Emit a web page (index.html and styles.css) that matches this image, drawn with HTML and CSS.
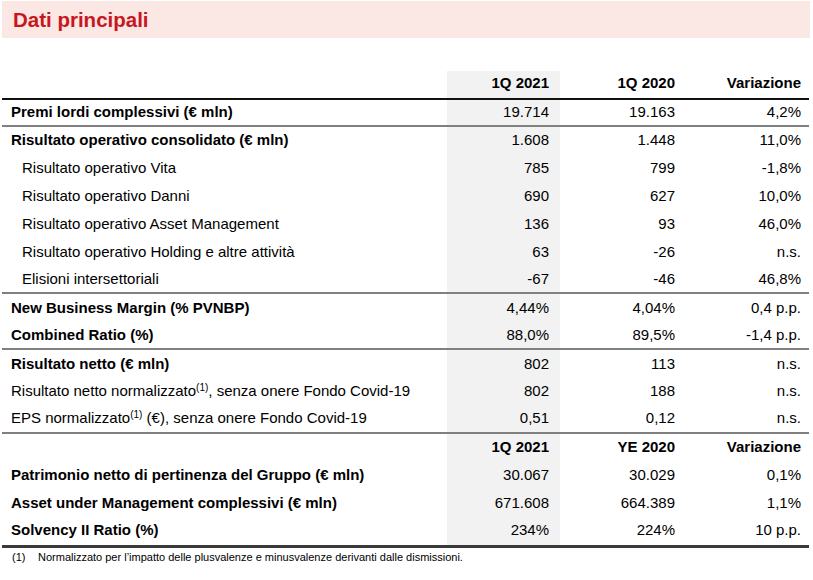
FILE: index.html
```html
<!DOCTYPE html>
<html lang="it">
<head>
<meta charset="utf-8">
<title>Dati principali</title>
<link rel="stylesheet" href="styles.css">
</head>
<body>
<div class="page">
  <div class="title-band"><h1 class="title">Dati principali</h1></div>
  <table class="data">
    <colgroup>
      <col class="c-label"><col class="c-q1"><col class="c-q2"><col class="c-var">
    </colgroup>
    <tr class="head">
      <td></td><td class="num hl">1Q 2021</td><td class="num">1Q 2020</td><td class="num">Variazione</td>
    </tr>
    <tr class="row strong top-rule sep first">
      <td>Premi lordi complessivi (€ mln)</td><td class="num hl">19.714</td><td class="num">19.163</td><td class="num">4,2%</td>
    </tr>
    <tr class="row strong">
      <td>Risultato operativo consolidato (€ mln)</td><td class="num hl">1.608</td><td class="num">1.448</td><td class="num">11,0%</td>
    </tr>
    <tr class="row sub">
      <td>Risultato operativo Vita</td><td class="num hl">785</td><td class="num">799</td><td class="num">-1,8%</td>
    </tr>
    <tr class="row sub">
      <td>Risultato operativo Danni</td><td class="num hl">690</td><td class="num">627</td><td class="num">10,0%</td>
    </tr>
    <tr class="row sub">
      <td>Risultato operativo Asset Management</td><td class="num hl">136</td><td class="num">93</td><td class="num">46,0%</td>
    </tr>
    <tr class="row sub">
      <td>Risultato operativo Holding e altre attività</td><td class="num hl">63</td><td class="num">-26</td><td class="num">n.s.</td>
    </tr>
    <tr class="row sub sep">
      <td>Elisioni intersettoriali</td><td class="num hl">-67</td><td class="num">-46</td><td class="num">46,8%</td>
    </tr>
    <tr class="row strong">
      <td>New Business Margin (% PVNBP)</td><td class="num hl">4,44%</td><td class="num">4,04%</td><td class="num">0,4 p.p.</td>
    </tr>
    <tr class="row strong sep">
      <td>Combined Ratio (%)</td><td class="num hl">88,0%</td><td class="num">89,5%</td><td class="num">-1,4 p.p.</td>
    </tr>
    <tr class="row strong">
      <td>Risultato netto (€ mln)</td><td class="num hl">802</td><td class="num">113</td><td class="num">n.s.</td>
    </tr>
    <tr class="row">
      <td>Risultato netto normalizzato<sup>(1)</sup>, senza onere Fondo Covid-19</td><td class="num hl">802</td><td class="num">188</td><td class="num">n.s.</td>
    </tr>
    <tr class="row sep">
      <td>EPS normalizzato<sup>(1)</sup> (€), senza onere Fondo Covid-19</td><td class="num hl">0,51</td><td class="num">0,12</td><td class="num">n.s.</td>
    </tr>
    <tr class="row subhead">
      <td></td><td class="num hl">1Q 2021</td><td class="num">YE 2020</td><td class="num">Variazione</td>
    </tr>
    <tr class="row strong">
      <td>Patrimonio netto di pertinenza del Gruppo (€ mln)</td><td class="num hl">30.067</td><td class="num">30.029</td><td class="num">0,1%</td>
    </tr>
    <tr class="row strong">
      <td>Asset under Management complessivi (€ mln)</td><td class="num hl">671.608</td><td class="num">664.389</td><td class="num">1,1%</td>
    </tr>
    <tr class="row strong last">
      <td>Solvency II Ratio (%)</td><td class="num hl">234%</td><td class="num">224%</td><td class="num">10 p.p.</td>
    </tr>
  </table>
  <p class="note"><span class="note-mark">(1)</span>Normalizzato per l’impatto delle plusvalenze e minusvalenze derivanti dalle dismissioni.</p>
</div>
</body>
</html>
```

FILE: styles.css
```css
* { box-sizing: border-box; }
html, body { margin: 0; padding: 0; background: #fff; }
body {
  font-family: "Liberation Sans", Arial, sans-serif;
  color: #000;
  width: 813px;
  height: 580px;
  overflow: hidden;
}
.page { padding: 1px 3px 0 2px; }
.title-band {
  background: #fbe7e3;
  height: 37px;
  display: flex;
  align-items: center;
  padding-left: 11px;
}
.title {
  margin: 0;
  font-size: 20.5px;
  font-weight: bold;
  color: #c8161d;
}
.data {
  margin-top: 33px;
  width: 807px;
  border-collapse: collapse;
  table-layout: fixed;
  font-size: 15px;
}
.c-label { width: 445px; }
.c-q1 { width: 113px; }
.c-q2 { width: 127px; }
.c-var { width: 122px; }
.data td {
  padding: 0;
  white-space: nowrap;
  vertical-align: middle;
}
.data td:first-child { padding-left: 9px; }
.num { text-align: right; }
.data td.num:nth-child(2) { padding-right: 11px; }
.data td.num:nth-child(3) { padding-right: 12px; }
.data td.num:nth-child(4) { padding-right: 8px; }
.hl { background: #f2f2f2; }
.head td { height: 28px; font-weight: bold; padding-bottom: 4px; }
.row td { height: 27.9px; padding-bottom: 1px; }
.strong td:first-child { font-weight: bold; }
.subhead td { font-weight: bold; }
.sub td:first-child { padding-left: 20px; }
.top-rule td { border-top: 2px solid #111; }
.first td { height: 27px; padding-bottom: 3px; }
.sep td { border-bottom: 2px solid #808080; }
.last td { border-bottom: 3px solid #3a3a3a; height: 30px; padding-bottom: 3px; }
sup { font-size: 10px; line-height: 0; vertical-align: 5px; }
.note {
  margin: 3px 0 0 0;
  padding-left: 10px;
  font-size: 11px;
  color: #000;
}
.note-mark { display: inline-block; width: 26px; }
```
